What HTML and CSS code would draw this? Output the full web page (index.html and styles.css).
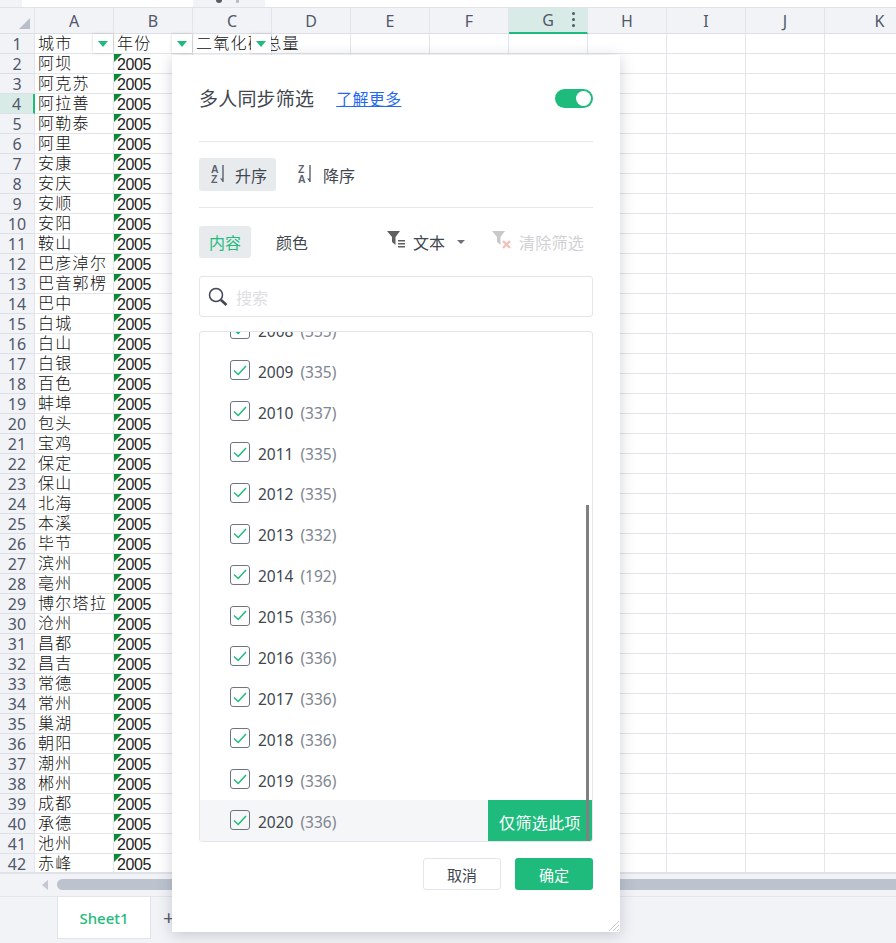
FILE: index.html
```html
<!DOCTYPE html>
<html lang="zh-CN">
<head>
  <meta charset="UTF-8">
  <title>Sheet1</title>
  <link rel="stylesheet" href="styles.css">
</head>
<body>
  <div class="app">
    <!-- Top strip, mostly cut off -->
    <div class="top-strip">
      <div class="top-gap"></div>
      <div class="top-input"></div>
      <div class="top-tab"><span class="top-dot"></span><span class="top-dot light"></span></div>
      <div class="top-rest"></div>
    </div>

    <!-- Sheet -->
    <div class="sheet" id="sheet"></div>

    <div class="hscroll">
      <svg class="hscroll-arrow" width="6" height="10" viewBox="0 0 6 10"><path d="M6 0v10L0 5z" fill="#c3c8d1"/></svg>
      <div class="hscroll-thumb"></div>
    </div>

    <div class="tabs-bar">
      <div class="sheet-tab">Sheet1</div>
      <div class="add-sheet">+</div>
    </div>
  </div>

  <!-- Filter panel -->
  <div class="filter-panel">
    <div class="panel-head">
      <span class="panel-title">多人同步筛选</span>
      <a class="learn-more" href="#">了解更多</a>
      <span class="toggle"><span class="toggle-knob"></span></span>
    </div>

    <div class="sort-row">
      <button class="sort-btn active">
        <svg width="18" height="24" viewBox="0 0 18 24">
          <text class="sort-letter" x="2" y="12">A</text>
          <text class="sort-letter" x="2" y="22">Z</text>
          <path d="M14 4v17" stroke="#5b6270" stroke-width="1.400"/>
          <path d="M11 17.500h3V21z" fill="#5b6270"/>
        </svg>
        <span>升序</span>
      </button>
      <button class="sort-btn">
        <svg width="18" height="24" viewBox="0 0 18 24">
          <text class="sort-letter" x="1" y="12">Z</text>
          <text class="sort-letter" x="1" y="22">A</text>
          <path d="M13 4v17" stroke="#5b6270" stroke-width="1.400"/>
          <path d="M10 17.500h3V21z" fill="#5b6270"/>
        </svg>
        <span>降序</span>
      </button>
    </div>

    <div class="filter-row">
      <button class="mode-btn active">内容</button>
      <button class="mode-btn">颜色</button>
      <div class="filter-tools">
        <span class="tool">
          <svg width="18" height="17" viewBox="0 0 18 17">
            <path d="M0 0h13L8.500 6v8L5 11V6z" fill="#5f5f5f"/>
            <path d="M11 9h7v1.400h-7zM11 12h7v1.400h-7zM11 15h7v1.400h-7z" fill="#5f5f5f"/>
          </svg>
          <span>文本</span>
          <i class="caret"></i>
        </span>
        <span class="tool disabled">
          <svg width="20" height="18" viewBox="0 0 20 18">
            <path d="M0 0h13L8.500 6v8L5 11V6z" fill="#c9c9c9"/>
            <path d="M11 10l7 7M18 10l-7 7" stroke="#f2c2ba" stroke-width="2.400"/>
          </svg>
          <span>清除筛选</span>
        </span>
      </div>
    </div>

    <div class="search-box">
      <svg width="20" height="20" viewBox="0 0 20 20">
        <circle cx="8" cy="8" r="6.500" fill="none" stroke="#3f4654" stroke-width="1.500"/>
        <path d="M13 13l5.500 5" stroke="#3f4654" stroke-width="2.600"/>
      </svg>
      <span class="search-hint">搜索</span>
    </div>

    <div class="value-list" id="value-list">
      <div class="list-scroll"></div>
    </div>

    <div class="panel-foot">
      <button class="btn-cancel">取消</button>
      <button class="btn-ok">确定</button>
    </div>

    <svg class="resize-grip" width="12" height="12" viewBox="0 0 12 12">
      <path d="M1 11L11 1M5 11l6-6M9 11l2-2" stroke="#c8ccd2" stroke-width="1"/>
    </svg>
  </div>

  <script src="script.js"></script>
</body>
</html>
```

FILE: styles.css
```css
* {
  box-sizing: border-box;
}

body {
  margin: 0;
  height: 943px;
  overflow: hidden;
  background-color: #f2f3f7;
  font-family: "Noto Sans", "Noto Sans CJK SC", sans-serif;
  color: #41464f;
}

button {
  font-family: inherit;
  border: none;
  background: none;
  padding: 0;
}

.app {
  display: flex;
  flex-direction: column;
  height: 943px;
}

/* top strip */
.top-strip {
  display: flex;
  height: 8px;
  flex: none;
  border-bottom: 1px solid #dfe2e8;
}

.top-gap {
  width: 22px;
}

.top-input {
  width: 171px;
  background-color: #fff;
}

.top-tab {
  width: 72px;
  display: flex;
  justify-content: center;
  gap: 14px;
  padding-right: 4px;
}

.top-dot {
  width: 6px;
  height: 3px;
  border-radius: 0 0 3px 3px;
  background-color: #555c68;
}

.top-dot.light {
  width: 3px;
  background-color: #b5bac3;
}

.top-rest {
  flex: 1;
  background-color: #fff;
}

/* sheet grid */
.sheet {
  display: grid;
  grid-template-columns: 35px repeat(10, 79px) 110px;
  grid-template-rows: 26px repeat(42, 20px);
  flex: none;
  height: 866px;
  border-bottom: 2px solid #dfe2e8;
  overflow: hidden;
  font-size: 16px;
}

.col-head,
.row-head,
.corner {
  background-color: #f2f3f7;
  color: #50586a;
  border-right: 1px solid #e3e5ea;
  border-bottom: 1px solid #dcdfe5;
  display: flex;
  align-items: center;
  justify-content: center;
  font-family: "Noto Sans", sans-serif;
}

.corner {
  position: relative;
}

.corner::after {
  content: "";
  position: absolute;
  right: 4px;
  bottom: 4px;
  border-style: solid;
  border-width: 0 0 11px 11px;
  border-color: transparent transparent #b9bfc9 transparent;
}

.col-head.selected {
  position: relative;
  background-color: #d9ebe7;
  border-bottom: 2px solid #1fbb7d;
}

.col-menu {
  position: absolute;
  right: 12px;
  top: 4px;
  display: flex;
  flex-direction: column;
  gap: 3px;
}

.col-menu i {
  width: 3px;
  height: 3px;
  border-radius: 50%;
  background-color: #50586a;
}

.row-head.selected {
  background-color: #d9ebe7;
  border-right: 2px solid #1fbb7d;
}

.cell {
  position: relative;
  background-color: #fff;
  color: #111;
  border-right: 1px solid #e3e5e9;
  border-bottom: 1px solid #e3e5e9;
  padding-left: 3px;
  line-height: 16px;
  white-space: nowrap;
  font-family: "Noto Sans CJK SC", sans-serif;
  font-weight: 300;
  letter-spacing: 1.300px;
}

.cell.year {
  font-family: "Liberation Sans", sans-serif;
  font-weight: 400;
  letter-spacing: -0.400px;
  font-size: 16px;
  line-height: 18px;
  color: #222;
  padding-top: 2px;
  padding-left: 3px;
}

.cell.year::before {
  content: "";
  position: absolute;
  left: 0;
  top: 0;
  border-style: solid;
  border-width: 8px 8px 0 0;
  border-color: #0a8a38 transparent transparent transparent;
}

.cell.title {
  z-index: 1;
}

.cell.under {
  z-index: 0;
}

.filter-btn {
  position: absolute;
  right: 0;
  top: 0;
  width: 20px;
  height: 19px;
  background-color: #fff;
  box-shadow: 0 0 3px rgba(0, 0, 0, 0.18);
  z-index: 2;
}

.filter-btn::after {
  content: "";
  position: absolute;
  left: 5px;
  top: 7px;
  border-style: solid;
  border-width: 6px 5px 0 5px;
  border-color: #1fbb7d transparent transparent transparent;
}

/* bottom bars */
.hscroll {
  flex: none;
  height: 23px;
  display: flex;
  align-items: center;
  padding-left: 42px;
  gap: 9px;
  border-bottom: 1px solid #e3e5ea;
}

.hscroll-arrow {
  flex: none;
}

.hscroll-thumb {
  flex: 1;
  height: 11px;
  margin-top: -1px;
  border-radius: 6px 0 0 6px;
  background-color: #bcc3ce;
}

.tabs-bar {
  flex: 1;
  display: flex;
  padding-left: 57px;
}

.sheet-tab {
  width: 94px;
  height: 42px;
  background-color: #fff;
  border: 1px solid #e0e3e9;
  border-top: none;
  color: #1fbb7d;
  font-size: 15px;
  font-weight: 500;
  display: flex;
  align-items: center;
  justify-content: center;
}

.add-sheet {
  margin-left: 12px;
  line-height: 42px;
  font-size: 20px;
  color: #555c68;
}

/* filter panel */
.filter-panel {
  position: absolute;
  left: 172px;
  top: 55px;
  width: 448px;
  height: 877px;
  padding: 27px 27px 0;
  background-color: #fff;
  box-shadow: 0 3px 14px rgba(40, 50, 70, 0.22);
  font-size: 16px;
}

.panel-head {
  display: flex;
  align-items: center;
  height: 32px;
  margin-bottom: 27px;
}

.panel-title {
  font-size: 19px;
  letter-spacing: 0.200px;
}

.learn-more {
  margin-left: 22px;
  color: #2468f2;
  font-size: 16px;
  letter-spacing: 0.300px;
}

.toggle {
  margin-left: auto;
  width: 38px;
  height: 19px;
  border-radius: 10px;
  background-color: #1fbb7d;
  display: flex;
  align-items: center;
  justify-content: flex-end;
  padding-right: 2px;
}

.toggle-knob {
  width: 15px;
  height: 15px;
  border-radius: 50%;
  background-color: #fff;
}

.sort-row {
  display: flex;
  gap: 11px;
  height: 67px;
  align-items: center;
  border-top: 1px solid #e6e8eb;
  border-bottom: 1px solid #e6e8eb;
}

.sort-btn {
  height: 33px;
  display: flex;
  align-items: center;
  gap: 8px;
  padding: 0 9px 0 10px;
  border-radius: 3px;
  font-size: 16px;
  color: #41464f;
}

.sort-btn svg {
  margin-top: -3px;
}

.sort-btn.active {
  background-color: #e8ebee;
}

.sort-letter {
  font-family: "Liberation Sans", sans-serif;
  font-size: 10.500px;
  font-weight: bold;
  fill: #5b6270;
}

.filter-row {
  display: flex;
  align-items: center;
  gap: 5px;
  height: 32px;
  margin-top: 18px;
}

.mode-btn {
  height: 32px;
  padding: 0 10px;
  border-radius: 3px;
  font-size: 16px;
  color: #41464f;
}

.mode-btn + .mode-btn {
  margin-left: 10px;
}

.mode-btn.active {
  background-color: #e8ebee;
  color: #1fbb7d;
}

.filter-tools {
  margin-left: auto;
  display: flex;
  align-items: center;
  gap: 27px;
  padding-right: 9px;
}

.tool {
  display: flex;
  align-items: center;
  gap: 8px;
}

.tool svg {
  margin-top: -5px;
}

.tool.disabled {
  gap: 7px;
  color: #cfd1d4;
  letter-spacing: 0.250px;
}

.caret {
  margin-left: 4px;
  border-style: solid;
  border-width: 4px 4px 0 4px;
  border-color: #6b6f76 transparent transparent transparent;
}

.search-box {
  display: flex;
  align-items: center;
  gap: 8px;
  height: 41px;
  margin-top: 18px;
  padding-left: 8px;
  border: 1px solid #e2e6ec;
  border-radius: 3px;
}

.search-hint {
  color: #dcdee2;
}

.value-list {
  position: relative;
  display: flex;
  flex-direction: column;
  justify-content: flex-end;
  height: 511px;
  margin-top: 14px;
  border: 1px solid #e2e6ec;
  border-radius: 3px;
  overflow: hidden;
}

.value-row {
  flex: none;
  display: flex;
  align-items: center;
  height: 40.900px;
  padding-left: 30px;
}

.value-row.hover {
  background-color: #f5f6f8;
}

.check {
  flex: none;
  width: 20px;
  height: 20px;
  margin-top: -1px;
  margin-right: 8px;
  border: 1px solid #6e7480;
  border-radius: 3px;
  display: flex;
  align-items: center;
  justify-content: center;
}

.value-name {
  margin-top: 2px;
  font-size: 15.500px;
  color: #41464f;
}

.value-count {
  margin-top: 2px;
  margin-left: 7px;
  font-size: 15.500px;
  color: #80858f;
}

.only-btn {
  margin-left: auto;
  width: 104px;
  height: 100%;
  padding-top: 2px;
  background-color: #1fbb7d;
  color: #fff;
  font-size: 16px;
  letter-spacing: 0.400px;
}

.list-scroll {
  position: absolute;
  right: 3px;
  bottom: 0;
  width: 3px;
  height: 336px;
  background-color: #808080;
  z-index: 1;
}

.panel-foot {
  display: flex;
  justify-content: flex-end;
  gap: 14px;
  margin-top: 16px;
}

.btn-cancel,
.btn-ok {
  width: 78px;
  height: 32px;
  border-radius: 3px;
  font-size: 15px;
}

.btn-cancel {
  border: 1px solid #e2e6ec;
  background-color: #fff;
  color: #41464f;
}

.btn-ok {
  background-color: #1fbb7d;
  color: #fff;
}

.resize-grip {
  position: absolute;
  right: 0;
  bottom: 0;
}
```

FILE: script.js
```js
const cities = ["阿坝", "阿克苏", "阿拉善", "阿勒泰", "阿里", "安康", "安庆", "安顺", "安阳", "鞍山",
  "巴彦淖尔", "巴音郭楞", "巴中", "白城", "白山", "白银", "百色", "蚌埠", "包头", "宝鸡",
  "保定", "保山", "北海", "本溪", "毕节", "滨州", "亳州", "博尔塔拉", "沧州", "昌都",
  "昌吉", "常德", "常州", "巢湖", "朝阳", "潮州", "郴州", "成都", "承德", "池州", "赤峰"];

const values = [[2008, 335], [2009, 335], [2010, 337], [2011, 335], [2012, 335], [2013, 332],
  [2014, 192], [2015, 336], [2016, 336], [2017, 336], [2018, 336], [2019, 336], [2020, 336]];

const letters = "ABCDEFGHIJK".split("");
const sheet = document.getElementById("sheet");
const valueList = document.getElementById("value-list");

function addCell(className, text) {
  const cell = document.createElement("div");
  cell.className = className;
  if (text) cell.textContent = text;
  sheet.appendChild(cell);
  return cell;
}

function addFilterBtn(cell) {
  const btn = document.createElement("span");
  btn.className = "filter-btn";
  cell.appendChild(btn);
}

// column headers
addCell("corner");
letters.forEach((letter) => {
  const head = addCell(letter === "G" ? "col-head selected" : "col-head", letter);
  if (letter === "G") {
    const menu = document.createElement("span");
    menu.className = "col-menu";
    menu.innerHTML = "<i></i><i></i><i></i>";
    head.appendChild(menu);
  }
});

// header row
addCell("row-head", "1");
addFilterBtn(addCell("cell", "城市"));
addFilterBtn(addCell("cell", "年份"));
addFilterBtn(addCell("cell title", "二氧化碳总量"));
for (let i = 3; i < letters.length; i++) addCell("cell under");

// data rows
cities.forEach((city, index) => {
  const rowNumber = index + 2;
  addCell(rowNumber === 4 ? "row-head selected" : "row-head", String(rowNumber));
  addCell("cell", city);
  addCell("cell year", "2005");
  for (let i = 2; i < letters.length; i++) addCell("cell");
});

// filter values
values.forEach(([year, count]) => {
  const row = document.createElement("div");
  row.className = year === 2020 ? "value-row hover" : "value-row";
  row.innerHTML = `
    <span class="check">
      <svg width="14" height="11" viewBox="0 0 14 11"><path d="M1 5.500L5.200 9.500 13 1" fill="none" stroke="#1fbb7d" stroke-width="1.500"/></svg>
    </span>
    <span class="value-name">${year}</span>
    <span class="value-count">(${count})</span>
    ${year === 2020 ? '<button class="only-btn">仅筛选此项</button>' : ""}
  `;
  valueList.appendChild(row);
});
```
